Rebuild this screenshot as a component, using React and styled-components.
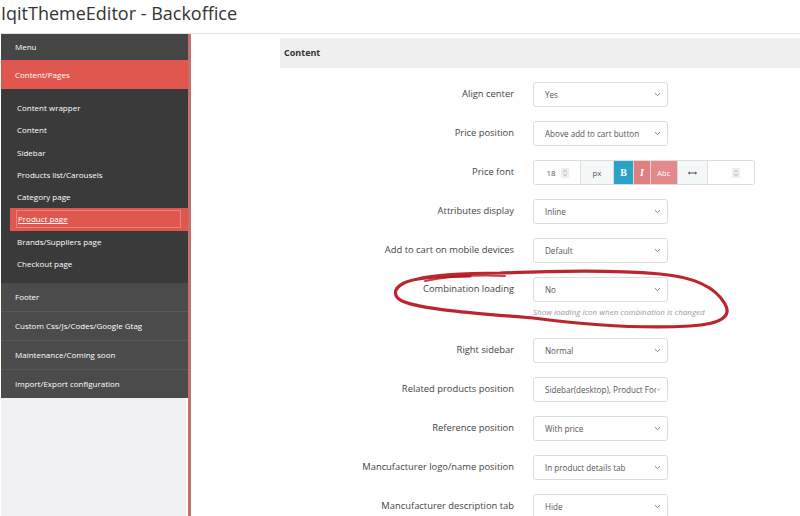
import React from 'react';
import styled, { createGlobalStyle } from 'styled-components';

const GlobalStyle = createGlobalStyle`
  html, body {
    margin: 0;
    padding: 0;
    background: #fff;
  }
  body {
    font-family: "Open Sans", "Liberation Sans", sans-serif;
    color: #333;
  }
`;

const Page = styled.div`
  position: relative;
  width: 800px;
  height: 516px;
  overflow: hidden;
`;

const Title = styled.h1`
  box-sizing: border-box;
  margin: 0;
  height: 33px;
  padding-left: 1px;
  font-size: 18px;
  font-weight: 400;
  line-height: 26px;
  color: #333;
`;

const Body = styled.div`
  display: flex;
  height: 483px;
  border-top: 1px solid #e3e3e3;
`;

const Sidebar = styled.nav`
  width: 187px;
  margin-left: 1px;
  display: flex;
  flex-direction: column;
  border-right: 3px solid #c4716c;
  font-size: 8px;
  color: #fff;
`;

const MenuItem = styled.div`
  box-sizing: border-box;
  flex: none;
  height: ${p => p.h}px;
  line-height: ${p => p.h - (p.sep ? 1 : 0)}px;
  padding-left: 14px;
  background: ${p => (p.active ? '#e0574f' : p.bg || '#4b4b4b')};
  border-top: ${p => (p.sep ? '1px solid #585858' : 'none')};
  white-space: nowrap;
  overflow: hidden;
`;

const SubMenu = styled.div`
  box-sizing: border-box;
  flex: none;
  height: 194px;
  background: #3a3a3a;
  padding-top: 8px;
`;

const SubItem = styled.div`
  box-sizing: border-box;
  height: 22.3px;
  line-height: 22.3px;
  padding-left: ${p => (p.current ? '6px' : '16px')};
  margin-left: ${p => (p.current ? '9px' : '0')};
  background: ${p => (p.current ? '#e0574f' : 'transparent')};
  white-space: nowrap;
  overflow: hidden;
`;

const CurrentLink = styled.span`
  display: block;
  box-sizing: border-box;
  height: 18px;
  line-height: 16px;
  margin: 2px 7px 0 0;
  padding-left: 1px;
  border: 1px solid rgba(255, 255, 255, 0.28);
  text-decoration: underline;
`;

const SideFill = styled.div`
  flex: 1;
  background: #f0f0f2;
  margin-right: 2px;
`;

const Main = styled.main`
  flex: 1;
  padding: 4px 0 0 89px;
`;

const PanelHead = styled.div`
  height: 30px;
  line-height: 30px;
  padding-left: 4px;
  background: #efefef;
  font-size: 9px;
  font-weight: 700;
  color: #333;
`;

const Form = styled.div`
  margin-top: 14px;
  display: flex;
  flex-direction: column;
  gap: 14px;
`;

const Row = styled.div`
  display: grid;
  grid-template-columns: 234px auto;
  column-gap: 19px;
  align-items: start;
`;

const Label = styled.div`
  text-align: right;
  font-size: 9.4px;
  line-height: 24px;
  color: #444;
  white-space: nowrap;
`;

const Select = styled.div`
  box-sizing: border-box;
  width: 135px;
  height: 25px;
  display: flex;
  align-items: center;
  justify-content: space-between;
  padding: 0 6px 0 11px;
  border: 1px solid #dcdcdc;
  border-radius: 3px;
  font-size: 8.1px;
  color: #555;
  white-space: nowrap;
  overflow: hidden;
`;

const SelectText = styled.span`
  overflow: hidden;
  max-width: 112px;
`;

const Help = styled.div`
  margin: 5px 0 7px;
  font-size: 8px;
  line-height: 10px;
  font-style: italic;
  color: #9a9a9a;
  white-space: nowrap;
`;

const FontGroup = styled.div`
  box-sizing: border-box;
  width: 222px;
  height: 25px;
  display: flex;
  border: 1px solid #dcdcdc;
  border-radius: 3px;
  overflow: hidden;
  font-size: 8px;
  color: #555;
`;

const Seg = styled.div`
  width: ${p => p.w}px;
  display: flex;
  align-items: center;
  justify-content: ${p => p.justify || 'center'};
  gap: 5px;
  padding-right: ${p => p.pr || 0}px;
  box-sizing: border-box;
  background: ${p => p.bg || '#fff'};
  color: ${p => p.fg || '#555'};
  border-left: ${p => (p.first ? 'none' : '1px solid #dcdcdc')};
  font-family: ${p => (p.serif ? '"Liberation Serif", "DejaVu Serif", serif' : 'inherit')};
  font-weight: ${p => (p.bold ? 700 : 400)};
  font-style: ${p => (p.italic ? 'italic' : 'normal')};
  font-size: ${p => p.fs || 8}px;
`;

const Spinner = styled.span`
  width: 8px;
  height: 10px;
  display: inline-flex;
  align-items: center;
  justify-content: center;
  background: #eee;
  border-radius: 1px;
`;

const Ring = styled.svg`
  position: absolute;
  left: 0;
  top: 0;
  pointer-events: none;
`;

const Chevron = () => (
  <svg width="7" height="5" viewBox="0 0 7 5">
    <path d="M1 1.2 L3.5 3.6 L6 1.2" fill="none" stroke="#777" strokeWidth="0.9" />
  </svg>
);

const SpinIcon = () => (
  <Spinner>
    <svg width="6" height="8" viewBox="0 0 6 8">
      <path d="M1.2 3 L3 1.3 L4.8 3 M1.2 5 L3 6.7 L4.8 5" fill="none" stroke="#999" strokeWidth="0.7" />
    </svg>
  </Spinner>
);

const subItems = [
  'Content wrapper',
  'Content',
  'Sidebar',
  'Products list/Carousels',
  'Category page',
  'Product page',
  'Brands/Suppliers page',
  'Checkout page',
];

const bottomItems = [
  'Footer',
  'Custom Css/Js/Codes/Google Gtag',
  'Maintenance/Coming soon',
  'Import/Export configuration',
];

const rows = [
  { label: 'Align center', value: 'Yes' },
  { label: 'Price position', value: 'Above add to cart button' },
  { label: 'Price font', font: true },
  { label: 'Attributes display', value: 'Inline' },
  { label: 'Add to cart on mobile devices', value: 'Default' },
  { label: 'Combination loading', value: 'No', help: 'Show loading icon when combination is changed' },
  { label: 'Right sidebar', value: 'Normal' },
  { label: 'Related products position', value: 'Sidebar(desktop), Product Footer(mobile)' },
  { label: 'Reference position', value: 'With price' },
  { label: 'Mancufacturer logo/name position', value: 'In product details tab' },
  { label: 'Mancufacturer description tab', value: 'Hide' },
];

const PriceFont = () => (
  <FontGroup>
    <Seg w={46} first justify="flex-end" pr={11}>
      18 <SpinIcon />
    </Seg>
    <Seg w={34} bg="#f5f8f9">px</Seg>
    <Seg w={20} bg="#2ba3c7" fg="#fff" serif bold fs={10}>B</Seg>
    <Seg w={17} bg="#e07f7f" fg="#fff" serif bold italic fs={10}>I</Seg>
    <Seg w={27} bg="#e28a8a" fg="#fff" fs={7.5}>Abc</Seg>
    <Seg w={31} bg="#f5f8f9">
      <svg width="9" height="4" viewBox="0 0 9 4">
        <path d="M0.5 2 H8.5 M0.5 2 L2 0.8 M0.5 2 L2 3.2 M8.5 2 L7 0.8 M8.5 2 L7 3.2" fill="none" stroke="#444" strokeWidth="0.9" />
      </svg>
    </Seg>
    <Seg w={47} justify="flex-end" pr={14}>
      <SpinIcon />
    </Seg>
  </FontGroup>
);

export default function App() {
  return (
    <Page>
      <GlobalStyle />
      <Title>IqitThemeEditor - Backoffice</Title>
      <Body>
        <Sidebar>
          <MenuItem h={26} bg="#454545">Menu</MenuItem>
          <MenuItem h={29} active>Content/Pages</MenuItem>
          <SubMenu>
            {subItems.map(item =>
              item === 'Product page' ? (
                <SubItem key={item} current>
                  <CurrentLink>{item}</CurrentLink>
                </SubItem>
              ) : (
                <SubItem key={item}>{item}</SubItem>
              )
            )}
          </SubMenu>
          {bottomItems.map((item, i) => (
            <MenuItem key={item} h={i === 0 ? 28 : 29} sep={i > 0}>
              {item}
            </MenuItem>
          ))}
          <SideFill />
        </Sidebar>
        <Main>
          <PanelHead>Content</PanelHead>
          <Form>
            {rows.map(row => (
              <Row key={row.label}>
                <Label>{row.label}</Label>
                <div>
                  {row.font ? (
                    <PriceFont />
                  ) : (
                    <Select>
                      <SelectText>{row.value}</SelectText>
                      <Chevron />
                    </Select>
                  )}
                  {row.help && <Help>{row.help}</Help>}
                </div>
              </Row>
            ))}
          </Form>
        </Main>
      </Body>
      <Ring width="800" height="516" viewBox="0 0 800 516">
        <path
          d="M470 276 C430 276 412 279 404 283 C392 289 394 297 402 301 C420 309 470 313 533 318 C580 324 640 329 690 326 C722 324 732 316 725 304 C716 288 695 277 660 274 C600 269 540 272 500 273 C460 273 428 276 418 279"
          fill="none"
          stroke="#b5121b"
          strokeWidth="3.2"
          strokeLinecap="round"
          opacity="0.92"
        />
        <path
          d="M425 281 C450 276 480 275 505 276"
          fill="none"
          stroke="#b5121b"
          strokeWidth="2"
          strokeLinecap="round"
          opacity="0.8"
        />
      </Ring>
    </Page>
  );
}
